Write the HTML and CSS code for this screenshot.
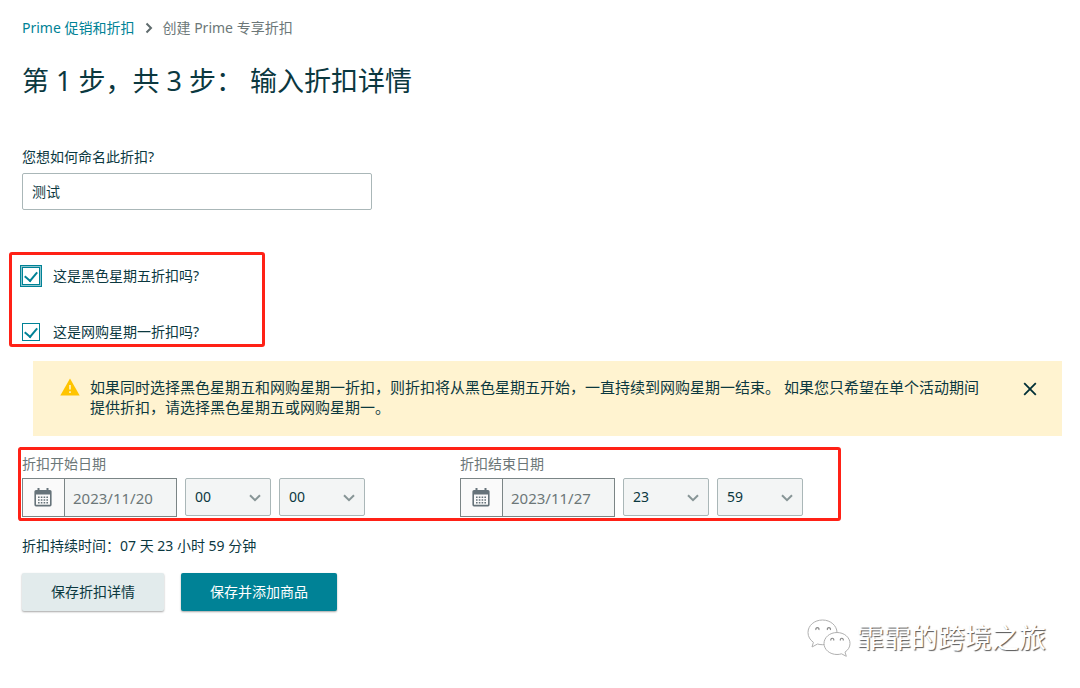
FILE: index.html
```html
<!DOCTYPE html>
<html lang="zh-CN">
<head>
    <meta charset="UTF-8">
    <meta name="viewport" content="width=device-width, initial-scale=1.0">
    <title>创建 Prime 专享折扣</title>
    <link rel="stylesheet" href="styles.css">
</head>
<body>
    <main class="page">
        <nav class="breadcrumb">
            <a href="#">Prime 促销和折扣</a>
            <svg width="8" height="12" viewBox="0 0 8 12"><path d="M1.5 1.5 L6 6 L1.5 10.5" fill="none" stroke="#5f6b6d" stroke-width="2"/></svg>
            <span>创建 Prime 专享折扣</span>
        </nav>

        <h1>第 1 步，共 3 步： 输入折扣详情</h1>

        <form>
            <label class="field-label" for="discountName">您想如何命名此折扣?</label>
            <input type="text" class="name-input" id="discountName" value="测试">

            <div class="checks">
                <div class="check-row">
                    <input type="checkbox" class="focused" id="blackFriday" checked>
                    <label for="blackFriday">这是黑色星期五折扣吗?</label>
                </div>
                <div class="check-row">
                    <input type="checkbox" id="cyberMonday" checked>
                    <label for="cyberMonday">这是网购星期一折扣吗?</label>
                </div>
            </div>

            <div class="alert" role="alert">
                <svg class="alert-icon" width="20" height="18" viewBox="0 0 20 18">
                    <path d="M10 0.5 L19.7 17.5 H0.3 Z" fill="#ffc400"/>
                    <path d="M9.2 7h1.6v4.6H9.2z M9.2 13.2h1.6v1.8H9.2z" fill="#fff3d0"/>
                </svg>
                <p>如果同时选择黑色星期五和网购星期一折扣，则折扣将从黑色星期五开始，一直持续到网购星期一结束。 如果您只希望在单个活动期间<br>提供折扣，请选择黑色星期五或网购星期一。</p>
                <button type="button" class="close" aria-label="关闭">
                    <svg width="14" height="14" viewBox="0 0 14 14"><path d="M1.2 1.2 L12.8 12.8 M12.8 1.2 L1.2 12.8" stroke="#002f36" stroke-width="1.8"/></svg>
                </button>
            </div>

            <div class="dates">
                <div class="date-group">
                    <label for="startDate">折扣开始日期</label>
                    <div class="date-row">
                        <div class="date-box">
                            <button type="button" aria-label="选择开始日期">
                                <svg width="18" height="19" viewBox="0 0 18 19">
                                    <path d="M3.5 0h2v2h7V0h2v2H16a1.6 1.6 0 0 1 1.6 1.6v13.2A1.6 1.6 0 0 1 16 18.4H2A1.6 1.6 0 0 1 .4 16.8V3.6A1.6 1.6 0 0 1 2 2h1.5z M2 6.500v10.300h14V6.500z" fill="#66737a" fill-rule="evenodd"/>
                                    <path d="M4 9.200h10 M4 12h10 M4 14.800h10" stroke="#66737a" stroke-width="1.500" stroke-dasharray="1.600 1.200"/>
                                </svg>
                            </button>
                            <input type="text" id="startDate" value="2023/11/20" readonly>
                        </div>
                        <div class="select-box">
                            <select aria-label="开始小时"><option>00</option></select>
                            <svg width="12" height="8" viewBox="0 0 12 8"><path d="M1 1.2 L6 6.2 L11 1.2" fill="none" stroke="#879596" stroke-width="2"/></svg>
                        </div>
                        <div class="select-box">
                            <select aria-label="开始分钟"><option>00</option></select>
                            <svg width="12" height="8" viewBox="0 0 12 8"><path d="M1 1.2 L6 6.2 L11 1.2" fill="none" stroke="#879596" stroke-width="2"/></svg>
                        </div>
                    </div>
                </div>
                <div class="date-group">
                    <label for="endDate">折扣结束日期</label>
                    <div class="date-row">
                        <div class="date-box">
                            <button type="button" aria-label="选择结束日期">
                                <svg width="18" height="19" viewBox="0 0 18 19">
                                    <path d="M3.5 0h2v2h7V0h2v2H16a1.6 1.6 0 0 1 1.6 1.6v13.2A1.6 1.6 0 0 1 16 18.4H2A1.6 1.6 0 0 1 .4 16.8V3.6A1.6 1.6 0 0 1 2 2h1.5z M2 6.500v10.300h14V6.500z" fill="#66737a" fill-rule="evenodd"/>
                                    <path d="M4 9.200h10 M4 12h10 M4 14.800h10" stroke="#66737a" stroke-width="1.500" stroke-dasharray="1.600 1.200"/>
                                </svg>
                            </button>
                            <input type="text" id="endDate" value="2023/11/27" readonly>
                        </div>
                        <div class="select-box">
                            <select aria-label="结束小时"><option>23</option></select>
                            <svg width="12" height="8" viewBox="0 0 12 8"><path d="M1 1.2 L6 6.2 L11 1.2" fill="none" stroke="#879596" stroke-width="2"/></svg>
                        </div>
                        <div class="select-box">
                            <select aria-label="结束分钟"><option>59</option></select>
                            <svg width="12" height="8" viewBox="0 0 12 8"><path d="M1 1.2 L6 6.2 L11 1.2" fill="none" stroke="#879596" stroke-width="2"/></svg>
                        </div>
                    </div>
                </div>
            </div>

            <p class="duration">折扣持续时间：07 天 23 小时 59 分钟</p>

            <div class="actions">
                <button type="button" class="btn">保存折扣详情</button>
                <button type="submit" class="btn primary">保存并添加商品</button>
            </div>
        </form>

        <footer class="signature">
            <svg width="44" height="38" viewBox="0 0 44 38">
                <g fill="#fff" stroke="#b0b0b0" stroke-width="1">
                    <path d="M15.5 1C7.4 1 1 6.5 1 13.5c0 4 2 7.4 5.4 9.800L5 28l5.500-3c1.600.5 3.300.7 5 .7 8.100 0 14.500-5.500 14.500-12.200S23.600 1 15.500 1z"/>
                    <path d="M30 13.500c-7.200 0-13 4.900-13 11s5.800 11 13 11c1.600 0 3.100-.2 4.500-.7l4.800 2.500-1.300-4.200c3-2 5-5 5-8.600 0-6.100-5.800-11-13-11z"/>
                </g>
                <path d="M9 11a1.600 1.600 0 1 1 2.800 0 M20.500 11a1.600 1.600 0 1 1 2.800 0 M24 21.500a1.500 1.500 0 1 1 2.600 0 M33.500 21.500a1.500 1.500 0 1 1 2.600 0" fill="none" stroke="#8c8c8c" stroke-width="1.200"/>
            </svg>
            <span>霏霏的跨境之旅</span>
        </footer>
    </main>
</body>
</html>
```
FILE: styles.css
```css
* {
    box-sizing: border-box;
}
body {
    margin: 0;
    background: #fff;
    color: #0b383f;
    font-family: "Noto Sans", "Noto Sans CJK SC", sans-serif;
    font-size: 14px;
    line-height: 20px;
}
input, select, button {
    font: inherit;
    color: inherit;
    margin: 0;
}
svg {
    display: block;
    flex: none;
}
.page {
    padding: 18px 18px 0 22px;
}
.breadcrumb {
    display: flex;
    align-items: center;
    gap: 10px;
    color: #6c7778;
}
.breadcrumb a {
    color: #008296;
    text-decoration: none;
}
h1 {
    margin: 24px 0 47px;
    font-size: 27px;
    line-height: 38px;
    font-weight: 400;
}
.field-label {
    display: block;
    margin-bottom: 6px;
}
.name-input {
    display: block;
    width: 350px;
    max-width: 100%;
    height: 37px;
    padding: 0 9px 2px;
    border: 1px solid #aab7b8;
    border-radius: 2px;
}
.checks {
    position: relative;
    width: 240px;
    margin-top: 56px;
    display: flex;
    flex-direction: column;
    gap: 36px;
}
/* red marker frames round the two groups */
.checks::after,
.dates::after {
    content: "";
    position: absolute;
    border: 3px solid #ff2116;
    border-radius: 3px;
    pointer-events: none;
}
.checks::after {
    inset: -14px -3px -5px -13px;
}
.check-row {
    display: flex;
    align-items: center;
    gap: 13px;
}
.check-row input {
    appearance: none;
    width: 18px;
    height: 18px;
    border: 1px solid #008296;
    background: #fff;
    display: grid;
    place-items: center;
}
.check-row input.focused {
    box-shadow: 0 0 0 1px #8cc5ce, 0 0 0 2px #008296;
}
.check-row input:checked::after {
    content: "";
    width: 6px;
    height: 10px;
    border: solid #008296;
    border-width: 0 2px 2px 0;
    transform: translateY(-1px) rotate(40deg);
}
.alert {
    display: flex;
    align-items: flex-start;
    margin: 19px 0 0 11px;
    padding: 17px 24px 18px 27px;
    background: #fff3d0;
    font-size: 15px;
}
.alert p {
    flex: 1;
    margin: -1px 0 1px 10px;
}
.close {
    padding: 4px 1px;
    border: 0;
    background: none;
    cursor: pointer;
}
.dates {
    position: relative;
    width: 782px;
    margin-top: 18px;
    display: flex;
    gap: 95px;
}
.dates::after {
    inset: -7px -37px -4px -4px;
}
.date-group label {
    display: block;
    margin-bottom: 4px;
    color: #6c7778;
}
.date-row {
    display: flex;
    gap: 8px;
}
.date-box {
    display: flex;
    width: 155px;
    height: 39px;
    border: 1px solid #7b8586;
}
.date-box button {
    width: 42px;
    padding: 0 0 0 11px;
    border: 0;
    border-right: 1px solid #7b8586;
    background: #fafafa;
}
.date-box input {
    flex: 1;
    min-width: 0;
    padding: 0 8px;
    border: 0;
    background: #f3f5f5;
    color: #6c7778;
    font-size: 15px;
}
.select-box {
    position: relative;
    width: 86px;
    height: 38px;
}
.select-box select {
    appearance: none;
    width: 100%;
    height: 100%;
    padding: 0 9px;
    border: 1px solid #aab7b8;
    border-radius: 2px;
    background: #f3f5f5;
}
.select-box svg {
    position: absolute;
    right: 10px;
    top: 16px;
    pointer-events: none;
}
.duration {
    margin: 19px 0 17px;
}
.actions {
    display: flex;
    gap: 17px;
}
.btn {
    height: 38px;
    padding: 0 29px 1px;
    border: 0;
    border-radius: 2px;
    background: #e2ebec;
    box-shadow: 0 1px 2px rgba(0, 0, 0, 0.35);
    cursor: pointer;
}
.btn.primary {
    background: #008296;
    color: #fff;
}
.signature {
    display: flex;
    justify-content: flex-end;
    align-items: center;
    gap: 6px;
    padding: 7px 16px 12px 0;
    color: #fff;
    font-size: 27px;
    line-height: 40px;
    text-shadow: 1px 1px 1px #555;
}
```
